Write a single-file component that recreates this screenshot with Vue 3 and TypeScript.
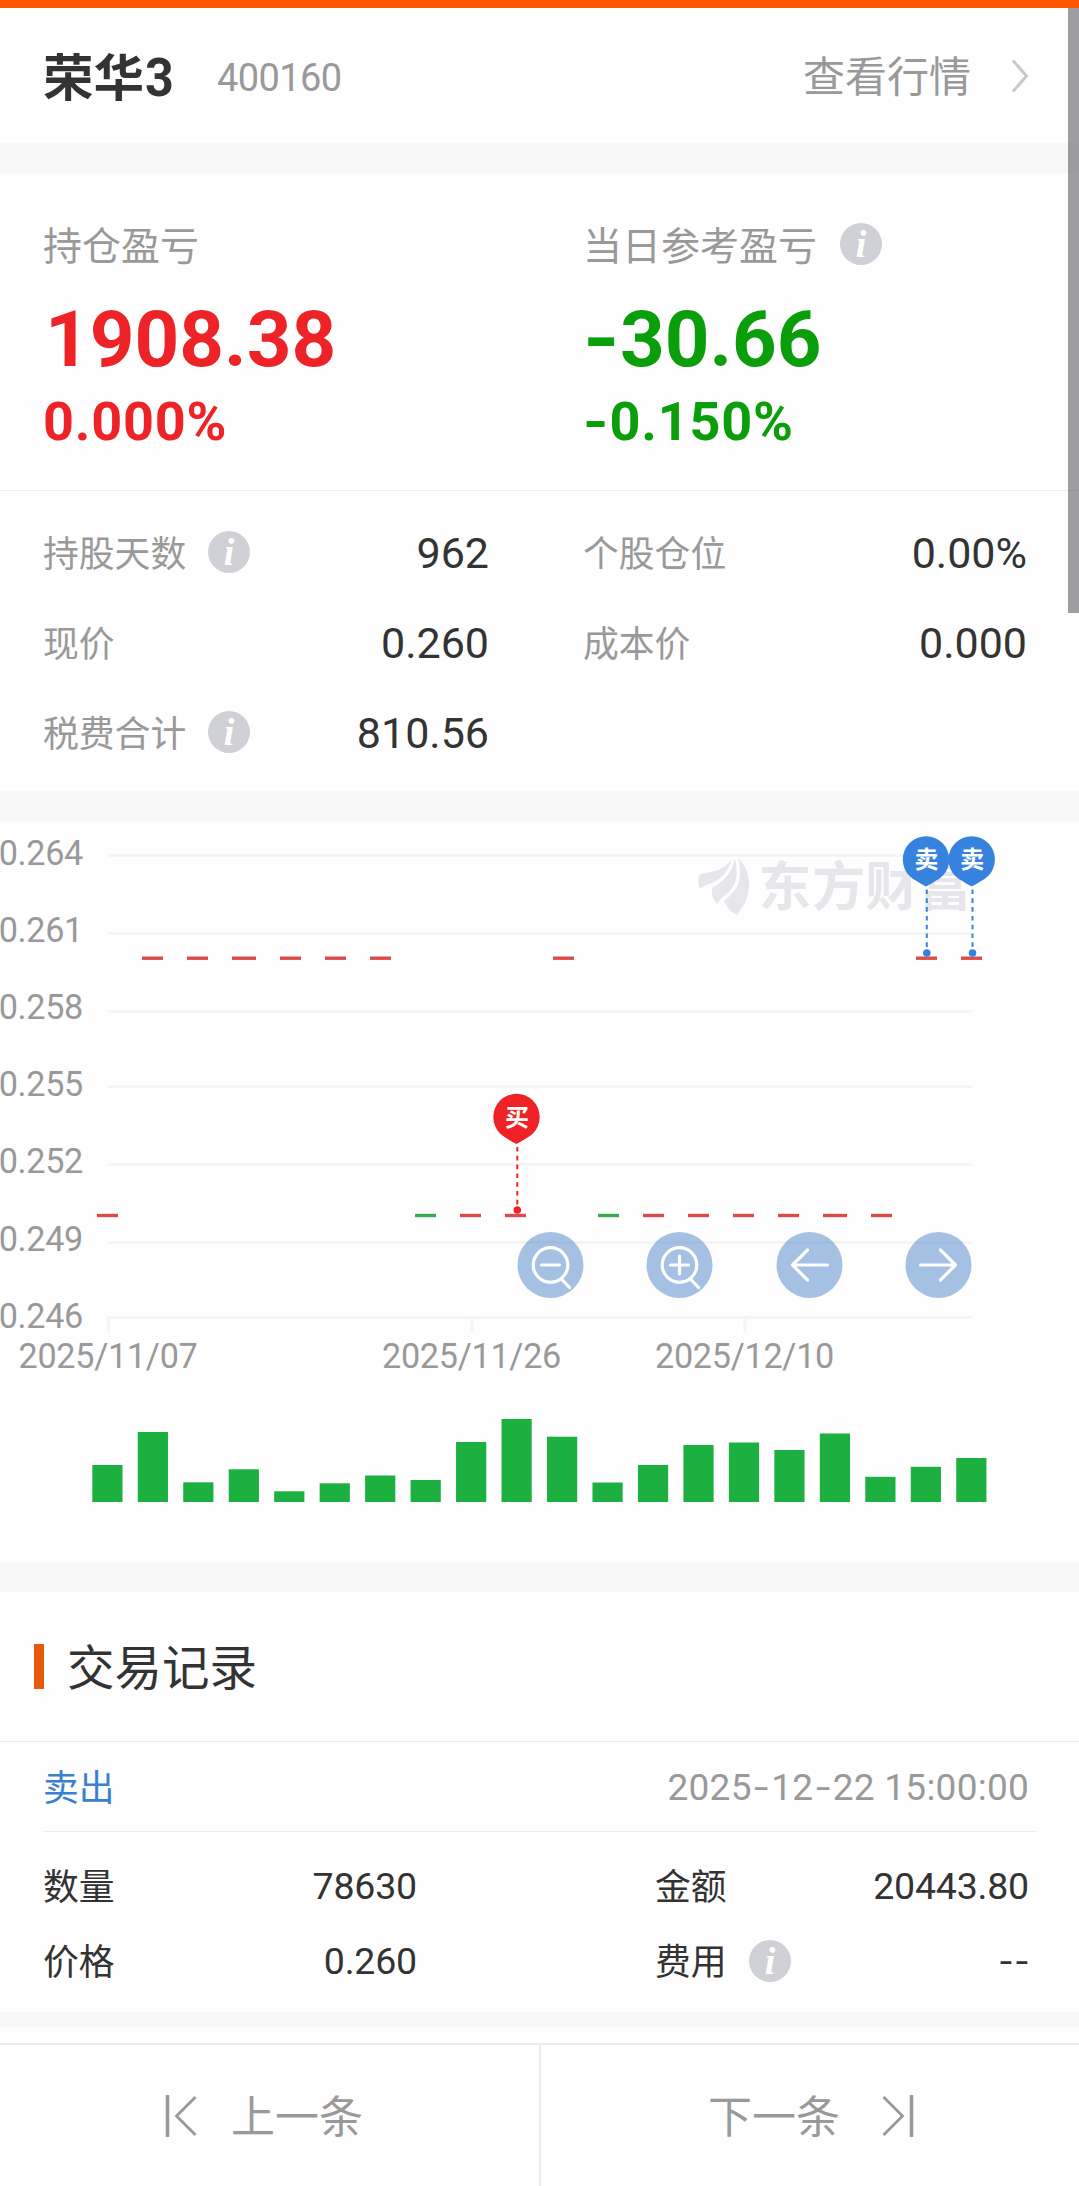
<script setup lang="ts">
interface Stat {
  label: string
  value: string
  info?: boolean
}

interface Dash {
  x: number
  y: number
  w: number
  up: boolean
}

interface Pin {
  x: number
  y: number
  end: number
  text: string
  color: string
}

const stats: Stat[] = [
  { label: '持股天数', value: '962', info: true },
  { label: '个股仓位', value: '0.00%' },
  { label: '现价', value: '0.260' },
  { label: '成本价', value: '0.000' },
  { label: '税费合计', value: '810.56', info: true },
]

const record: Stat[] = [
  { label: '数量', value: '78630' },
  { label: '金额', value: '20443.80' },
  { label: '价格', value: '0.260' },
  { label: '费用', value: '--', info: true },
]

const axis = [
  { label: '0.264', line: 34.5, base: 44 },
  { label: '0.261', line: 112.5, base: 121 },
  { label: '0.258', line: 190.5, base: 198 },
  { label: '0.255', line: 265.5, base: 275 },
  { label: '0.252', line: 343.5, base: 352 },
  { label: '0.249', line: 421.5, base: 430 },
  { label: '0.246', line: 496.5, base: 507 },
]

const dates = [
  { label: '2025/11/07', x: 108 },
  { label: '2025/11/26', x: 471.5 },
  { label: '2025/12/10', x: 744.5 },
]

const high = 137.2
const low = 394.5
const dashes: Dash[] = [
  { x: 97, y: low, w: 21, up: true },
  { x: 142, y: high, w: 21, up: true },
  { x: 187, y: high, w: 21, up: true },
  { x: 232, y: high, w: 24, up: true },
  { x: 280, y: high, w: 21, up: true },
  { x: 325, y: high, w: 21, up: true },
  { x: 370, y: high, w: 21, up: true },
  { x: 415, y: low, w: 21, up: false },
  { x: 460, y: low, w: 21, up: true },
  { x: 505, y: low, w: 21, up: true },
  { x: 553, y: high, w: 21, up: true },
  { x: 598, y: low, w: 21, up: false },
  { x: 643, y: low, w: 21, up: true },
  { x: 688, y: low, w: 21, up: true },
  { x: 733, y: low, w: 21, up: true },
  { x: 778, y: low, w: 21, up: true },
  { x: 823, y: low, w: 24, up: true },
  { x: 871, y: low, w: 21, up: true },
  { x: 916, y: high, w: 21, up: true },
  { x: 961, y: high, w: 21, up: true },
]

const pins: Pin[] = [
  { x: 516.5, y: 296, end: 389, text: '买', color: '#ef2226' },
  { x: 926, y: 38.5, end: 132, text: '卖', color: '#3782df' },
  { x: 971.7, y: 38.5, end: 132, text: '卖', color: '#3782df' },
]

const volumes = [37, 70, 19.7, 32.7, 10.7, 18.7, 26.5, 22, 60, 83, 65.3, 19.5, 37, 57, 59.5, 52, 68.5, 25.2, 35.2, 44]
</script>

<template>
  <div class="page">
    <div class="topbar"></div>
    <header class="head">
      <h1 class="name">荣华<span class="name-num">3</span></h1>
      <span class="code">400160</span>
      <span class="quote">查看行情</span>
      <svg class="chevron" width="18" height="36" viewBox="0 0 18 36">
        <path d="M2 2.500L15.500 18L2 33.500" fill="none" stroke="#c8c8c8" stroke-width="3" />
      </svg>
    </header>
    <div class="band"></div>

    <section class="summary">
      <div class="profit up">
        <div class="caption"><span class="label-lg">持仓盈亏</span></div>
        <div class="amount gain">1908.38</div>
        <div class="rate">0.000%</div>
      </div>
      <div class="profit down">
        <div class="caption">
          <span class="label-lg">当日参考盈亏</span>
          <svg class="info" viewBox="0 0 42 42">
            <circle cx="21" cy="21" r="21" />
            <text x="21" y="33.500">i</text>
          </svg>
        </div>
        <div class="amount"><span class="minus">-</span>30.66</div>
        <div class="rate"><span class="minus">-</span>0.150%</div>
      </div>
    </section>

    <section class="stats">
      <div v-for="s in stats" :key="s.label" class="stat">
        <span class="label">{{ s.label }}</span>
        <svg v-if="s.info" class="info" viewBox="0 0 42 42">
          <circle cx="21" cy="21" r="21" />
          <text x="21" y="33.500">i</text>
        </svg>
        <span class="value">{{ s.value }}</span>
      </div>
    </section>
    <div class="band"></div>

    <section class="chart">
      <svg width="1079" height="741" viewBox="0 0 1079 741">
        <g class="grid">
          <line v-for="a in axis" :key="a.label" x1="108" x2="972" :y1="a.line" :y2="a.line" />
          <line v-for="d in dates" :key="d.label" :x1="d.x + 0.5" :x2="d.x + 0.5" y1="496" y2="512" />
        </g>
        <g class="watermark">
          <path d="M732 38C724 49 714 51 700 53C697.500 58 698 63 700 68C707 61 724 64 732 38Z" />
          <path d="M735 37C731 56 719 63 712 67C711 73 713 78 717 83C725 70 742 70 735 37Z" />
          <path d="M738 37C745 65 733 72 724 80C727 87 732 92 737 94C745 83 750 74 749 61C748 50 744 42 738 37Z" />
          <text x="758.500" y="84.500">东方财富</text>
        </g>
        <g class="axis">
          <text v-for="a in axis" :key="a.label" x="83" :y="a.base" text-anchor="end">{{ a.label }}</text>
          <text v-for="d in dates" :key="d.label" :x="d.x" y="546.500" text-anchor="middle">{{ d.label }}</text>
        </g>
        <rect
          v-for="d in dashes"
          :key="d.x"
          :x="d.x"
          :y="d.y - 1.7"
          :width="d.w"
          height="3.400"
          :fill="d.up ? '#dc4a4a' : '#3aa956'"
        />
        <g v-for="p in pins" :key="p.x" class="pin">
          <line :x1="p.x + 0.8" :x2="p.x + 0.8" :y1="p.y + 30" :y2="p.end" :stroke="p.color" />
          <circle :cx="p.x + 0.8" :cy="p.end" r="3.800" :fill="p.color" />
          <circle :cx="p.x" :cy="p.y" r="23.200" :fill="p.color" />
          <path :d="`M${p.x - 20} ${p.y + 11.500}Q${p.x - 14} ${p.y + 20} ${p.x} ${p.y + 27}Q${p.x + 14} ${p.y + 20} ${p.x + 20} ${p.y + 11.500}Z`" :fill="p.color" />
          <text :x="p.x + 0.5" :y="p.y + 8.500" text-anchor="middle">{{ p.text }}</text>
        </g>
        <g class="tool" transform="translate(550.500 444)">
          <circle class="disc" r="33" />
          <circle r="17.300" />
          <path d="M-9 0H9M11 14L19 22.500" />
        </g>
        <g class="tool" transform="translate(679.500 444)">
          <circle class="disc" r="33" />
          <circle r="17.300" />
          <path d="M-9 0H9M0 -9V9M11 14L19 22.500" />
        </g>
        <g class="tool" transform="translate(809.500 444)">
          <circle class="disc" r="33" />
          <path d="M18 0H-17M-2 -15L-17 0L-2 15" />
        </g>
        <g class="tool" transform="translate(938.500 444)">
          <circle class="disc" r="33" />
          <path d="M-18 0H17M2 -15L17 0L2 15" />
        </g>
        <rect
          v-for="(v, i) in volumes"
          :key="i"
          :x="92.3 + i * 45.47"
          :y="681 - v"
          width="30.200"
          :height="v"
          fill="#1cb040"
        />
      </svg>
    </section>
    <div class="band"></div>

    <section class="records">
      <div class="section-title"><i class="mark"></i><span class="title-text">交易记录</span></div>
      <div class="record-head">
        <span class="side">卖出</span>
        <span class="time">2025<b>-</b>12<b>-</b>22 15:00:00</span>
      </div>
      <div class="record-grid">
        <div v-for="r in record" :key="r.label" class="cell">
          <span class="label">{{ r.label }}</span>
          <svg v-if="r.info" class="info" viewBox="0 0 42 42">
            <circle cx="21" cy="21" r="21" />
            <text x="21" y="33.500">i</text>
          </svg>
          <span class="value" :class="{ empty: r.value === '--' }">{{ r.value }}</span>
        </div>
      </div>
    </section>
    <div class="band thin"></div>
    <div class="rest"></div>

    <footer class="pager">
      <div class="prev">
        <svg width="32" height="44" viewBox="0 0 32 44">
          <path d="M2.500 1V43" stroke-width="3.500" />
          <path d="M30.500 3L11.500 22L30.500 41" />
        </svg>
        <span class="pager-text">上一条</span>
      </div>
      <div class="next">
        <span class="pager-text">下一条</span>
        <svg width="32" height="44" viewBox="0 0 32 44">
          <path d="M29.500 1V43" stroke-width="3.500" />
          <path d="M1.500 3L20.500 22L1.500 41" />
        </svg>
      </div>
    </footer>
    <div class="scrollbar"></div>
  </div>
</template>

<style>
body {
  margin: 0;
  background: #fefefe;
}
</style>

<style scoped>
.page {
  position: relative;
  width: 1079px;
  height: 2186px;
  overflow: hidden;
  display: flex;
  flex-direction: column;
  background: #fefefe;
  color: #333;
  font-family: 'Noto Sans CJK SC', sans-serif;
}
.page > * {
  flex: none;
  box-sizing: border-box;
}
.topbar {
  height: 8px;
  background: #ff5400;
}
.head {
  height: 135px;
  padding: 0 50px 0 43px;
  display: flex;
  align-items: center;
}
.name {
  margin: 0;
  width: 131px;
  font-size: 50.5px;
  line-height: 60px;
  font-weight: 700;
  white-space: nowrap;
  padding-bottom: 2px;
}
.name-num {
  display: inline-block;
  font-family: Roboto, sans-serif;
  font-size: 54px;
  line-height: 1;
  margin-left: 1px;
  transform: scaleX(0.93);
  transform-origin: left;
}
.code {
  margin-left: 43px;
  font: 38px/60px Roboto, sans-serif;
  letter-spacing: -0.6px;
  color: #999;
  padding-top: 5px;
}
.quote {
  margin-left: auto;
  font-size: 42px;
  line-height: 60px;
  color: #999;
  padding-bottom: 3px;
}
.chevron {
  margin-left: 40px;
}
.band {
  height: 30px;
  background: #f8f8f8;
}
.band.thin {
  height: 15px;
}
.summary {
  height: 318px;
  display: flex;
  border-bottom: 1px solid #ededed;
}
.profit {
  width: 540px;
  flex: none;
  padding: 41px 0 0 43px;
  box-sizing: border-box;
}
.up {
  color: #ee2327;
}
.down {
  color: #0a9f0a;
}
.caption {
  display: flex;
  align-items: center;
  height: 60px;
  color: #999;
}
.label-lg {
  font-size: 39px;
  line-height: 60px;
  padding-bottom: 3px;
}
.caption .info {
  margin-left: 23px;
}
.info {
  width: 42px;
  height: 42px;
  flex: none;
  margin-left: 22px;
}
.info circle {
  fill: #d0d1d6;
}
.info text {
  fill: #fff;
  font: italic 700 38px 'Liberation Serif', serif;
  text-anchor: middle;
}
.amount {
  margin-top: 21px;
  height: 90px;
  font: 700 78px/90px Roboto, sans-serif;
}
.gain {
  padding-left: 2px;
}
.rate {
  margin-top: 7px;
  height: 60px;
  font: 700 54px/60px Roboto, sans-serif;
  letter-spacing: 0.8px;
}
.minus {
  display: inline-block;
  transform: scaleX(1.2);
  transform-origin: left;
  margin-right: 0.08em;
}
.stats {
  height: 300px;
  padding-top: 16px;
  display: grid;
  grid-template-columns: 446px 444px;
  grid-auto-rows: 90px;
  column-gap: 94px;
  padding-left: 43px;
}
.stat,
.cell {
  display: flex;
  align-items: center;
}
.label {
  font-size: 35.8px;
  line-height: 60px;
  padding-bottom: 3px;
}
.stat .label {
  color: #999;
}
.value {
  margin-left: auto;
  font: 43px/60px Roboto, sans-serif;
  padding-top: 1px;
}
.chart {
  height: 741px;
}
.chart svg {
  display: block;
}
.grid line {
  stroke: #f5f5f5;
  stroke-width: 3;
}
.watermark {
  fill: #e6e6eb;
}
.watermark text {
  font: 700 53px 'Noto Sans CJK SC', sans-serif;
  letter-spacing: 0.4px;
}
.axis text {
  font: 34.2px Roboto, sans-serif;
  letter-spacing: -0.3px;
  fill: #999;
}
.pin line {
  stroke-width: 2;
  stroke-dasharray: 4.6 4.2;
}
.pin text {
  font: 700 24px 'Noto Sans CJK SC', sans-serif;
  fill: #fff;
}
.tool {
  fill: none;
  stroke: #fff;
  stroke-width: 3.2;
  stroke-linecap: round;
  stroke-linejoin: round;
}
.tool .disc {
  fill: rgba(55, 118, 194, 0.45);
  stroke: none;
}
.section-title {
  height: 150px;
  box-sizing: border-box;
  padding-left: 34px;
  display: flex;
  align-items: center;
  border-bottom: 1px solid #ececec;
}
.title-text {
  font-size: 47.500px;
  line-height: 60px;
  padding-bottom: 4px;
}
.mark {
  width: 10px;
  height: 45px;
  margin-right: 23px;
  background: #e8590c;
}
.record-head {
  height: 90px;
  box-sizing: border-box;
  margin: 0 42px 0 43px;
  padding-right: 8px;
  display: flex;
  align-items: center;
  justify-content: space-between;
  border-bottom: 1px solid #ececec;
}
.side {
  font-size: 35.800px;
  line-height: 60px;
  padding-bottom: 3px;
  color: #3b7fd1;
}
.time {
  font: 37px/60px Roboto, sans-serif;
  letter-spacing: 0.25px;
  color: #999;
  padding-top: 3px;
}
.time b {
  display: inline-block;
  font-weight: 400;
  transform: scaleX(1.4);
  margin: 0 4.500px;
}
.record-grid {
  height: 180px;
  box-sizing: border-box;
  padding: 16px 0 0 43px;
  display: grid;
  grid-template-columns: 374px 374px;
  grid-auto-rows: 75px;
  column-gap: 238px;
}
.record-grid .value {
  font-size: 37.500px;
  letter-spacing: -0.2px;
  padding-top: 0;
}
.record-grid .empty {
  letter-spacing: 3px;
  margin-right: -3px;
  transform: scaleX(1.2);
  transform-origin: right;
}
.rest {
  height: 16px;
}
.pager {
  height: 143px;
  display: flex;
  border-top: 2px solid #ececec;
  color: #999;
}
.pager-text {
  font-size: 44px;
  line-height: 60px;
  padding-bottom: 4px;
}
.pager svg {
  fill: none;
  stroke: #999;
  stroke-width: 2.800;
}
.prev,
.next {
  width: 541px;
  flex: none;
  display: flex;
  align-items: center;
  box-sizing: border-box;
}
.prev {
  padding-left: 165px;
  gap: 34px;
  border-right: 2px solid #ececec;
}
.next {
  padding-left: 167px;
  gap: 42px;
}
.scrollbar {
  position: absolute;
  top: 8px;
  right: 0;
  width: 11px;
  height: 605px;
  background: rgba(60, 58, 67, 0.49);
}
</style>
